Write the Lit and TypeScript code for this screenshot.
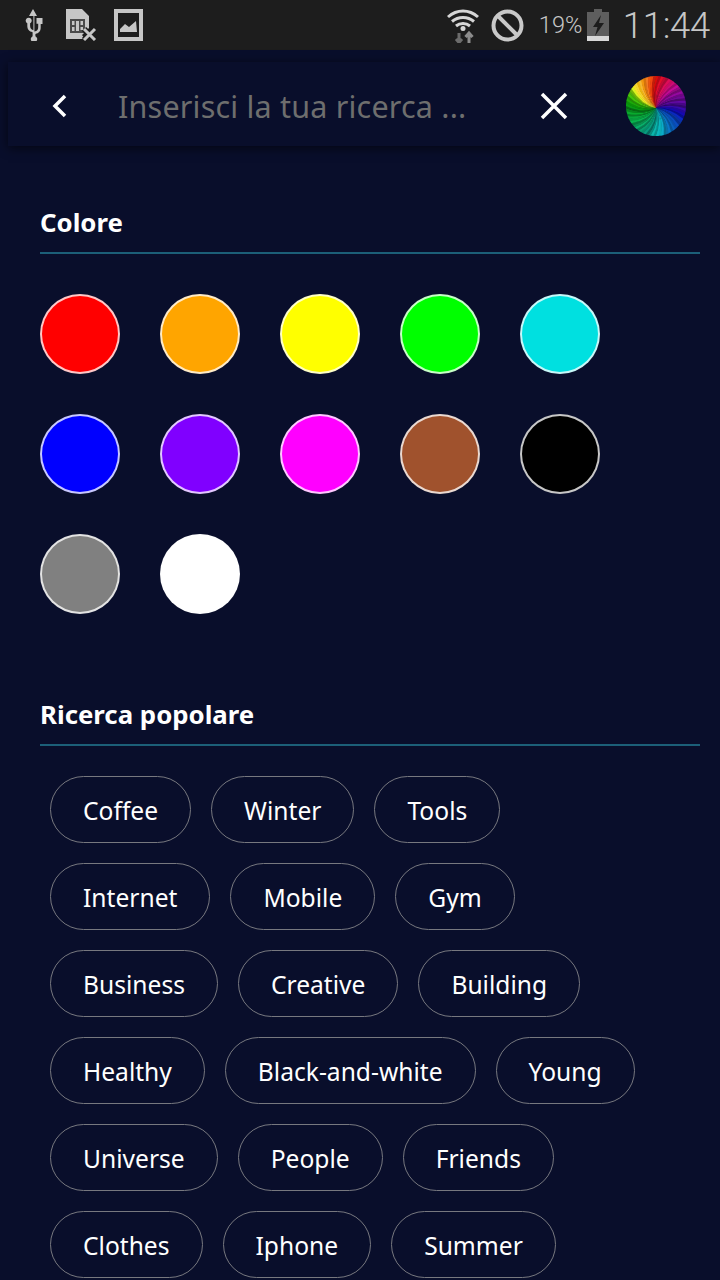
import { LitElement, html, css, svg } from "lit";
import { customElement } from "lit/decorators.js";

const SWATCHES = [
  "#ff0000", "#ffa500", "#ffff00", "#00ff00", "#00e0e0",
  "#0000ff", "#8000ff", "#ff00ff", "#a0522d", "#000000",
  "#808080", "#ffffff",
];

const TAG_ROWS = [
  ["Coffee", "Winter", "Tools"],
  ["Internet", "Mobile", "Gym"],
  ["Business", "Creative", "Building"],
  ["Healthy", "Black-and-white", "Young"],
  ["Universe", "People", "Friends"],
  ["Clothes", "Iphone", "Summer"],
];

/* Clock position, hue and lightness of the wheel's colour bands. */
const BANDS: [number, number, number][] = [
  [0, 360, 42], [0.08, 335, 42], [0.18, 290, 27], [0.25, 265, 30],
  [0.33, 225, 36], [0.42, 205, 36], [0.47, 185, 38], [0.55, 170, 28],
  [0.65, 145, 33], [0.75, 125, 28], [0.82, 95, 38], [0.86, 55, 55],
  [0.92, 35, 52], [0.97, 15, 48], [1, 0, 42],
];

function bandAt(t: number): [number, number] {
  for (let i = 1; i < BANDS.length; i++) {
    const [t0, h0, l0] = BANDS[i - 1];
    const [t1, h1, l1] = BANDS[i];
    if (t <= t1) {
      const k = (t - t0) / (t1 - t0);
      return [h0 + k * (h1 - h0), l0 + k * (l1 - l0)];
    }
  }
  return [0, 42];
}

/* Swirled hue wheel: thin curved wedges around a slightly low centre. */
function wheelWedges() {
  const parts = [];
  const n = 72;
  const r = 30;
  const cy = 2;
  const bend = 0.4;
  for (let i = 0; i < n; i++) {
    const a0 = (i / n) * Math.PI * 2 - Math.PI / 2;
    const a1 = ((i + 1.25) / n) * Math.PI * 2 - Math.PI / 2;
    const mx = (a: number) => (r * 0.5 * Math.cos(a - bend)).toFixed(2);
    const my = (a: number) => (cy + r * 0.5 * Math.sin(a - bend)).toFixed(2);
    const ex = (a: number) => (r * Math.cos(a)).toFixed(2);
    const ey = (a: number) => (r * Math.sin(a)).toFixed(2);
    const [hue, base] = bandAt(i / n);
    const light = base + [3, -5, 5, -2, -7, 4, 0][i % 7];
    const d = `M0 ${cy}Q${mx(a0)} ${my(a0)} ${ex(a0)} ${ey(a0)}A${r} ${r} 0 0 1 ${ex(a1)} ${ey(a1)}Q${mx(a1)} ${my(a1)} 0 ${cy}Z`;
    parts.push(svg`<path d=${d} fill=${`hsl(${hue} 90% ${light}%)`}></path>`);
  }
  return parts;
}

@customElement("app-root")
export class AppRoot extends LitElement {
  static styles = css`
    :host {
      display: block;
      width: 720px;
      height: 1280px;
      overflow: hidden;
      background: #090e2b;
      font-family: "Noto Sans", "Lato", sans-serif;
      color: #fff;
    }
    svg { display: block; flex: none; }
    .status {
      height: 50px;
      background: #1d1d1d;
      display: flex;
      align-items: center;
      color: #c6c6c6;
      font-family: "Roboto", sans-serif;
    }
    .status .usb { margin-left: 21px; }
    .status .sim { margin-left: 21px; }
    .status .pic { margin-left: 17px; }
    .status .wifi { margin-left: auto; }
    .status .block { margin-left: 11px; }
    .pct { margin-left: 15px; font-size: 23.5px; font-weight: 300; width: 44px; }
    .status .batt { margin-left: 4px; }
    .clock { margin-left: 14px; margin-right: 10px; font-size: 36.5px; font-weight: 300; letter-spacing: -0.3px; }

    .search {
      margin: 12px 0 0 8px;
      width: 712px;
      height: 84px;
      padding-top: 4px;
      background: #090e2b;
      box-shadow: 0 2px 10px rgba(0, 0, 0, 0.6);
      display: flex;
      align-items: center;
      box-sizing: border-box;
      position: relative;
    }
    .search .back { margin-left: 44px; }
    .hint {
      margin-left: 50px;
      width: 422px;
      font-size: 30.5px;
      letter-spacing: 0.2px;
      color: #6e6e6e;
      white-space: nowrap;
    }
    .search .wheel { margin-left: 58px; }

    .section { padding: 0 20px 0 40px; }
    .colors { margin-top: 57px; }
    .popular { margin-top: 81px; }
    h2 {
      margin: 0;
      font-size: 25.8px;
      line-height: 38px;
      font-weight: 700;
      padding-bottom: 11px;
      border-bottom: 2px solid #1c5f78;
    }
    .swatches {
      display: grid;
      grid-template-columns: repeat(5, 80px);
      grid-auto-rows: 80px;
      gap: 40px;
      margin-top: 40px;
    }
    .swatch {
      border-radius: 50%;
      box-sizing: border-box;
      border: 2px solid rgba(255, 255, 255, 0.78);
    }
    .tags { margin: 30px 0 0 10px; display: flex; flex-direction: column; gap: 20px; }
    .tag-row { display: flex; gap: 20px; }
    .tag {
      height: 67px;
      box-sizing: border-box;
      border: 1px solid #77787f;
      border-radius: 34px;
      padding: 1px 32px 0;
      display: flex;
      align-items: center;
      font-size: 24.6px;
    }
  `;

  render() {
    return html`
      <div class="status">
        <svg class="usb" width="24" height="32" viewBox="0 0 24 32" fill="#c6c6c6">
          <path d="M12 0l4 7h-2.600v15.600c3-.6 3.800-2 3.800-4.600v-3.200h-1.700V9h6v6h-1.800v3.300c0 4-1.800 6-5.300 6.600v2.300a3.200 3.200 0 1 1-2.800 0v-4c-3.500-.6-5.300-2.600-5.300-6.600v-2.300a3 3 0 1 1 2.800 0v2.300c0 2.600.8 4 3.300 4.600V7H8z"></path>
        </svg>
        <svg class="sim" width="31" height="32" viewBox="0 0 31 32">
          <path d="M0 0h16l7 7v12l-7 7 3 4H0z" fill="#c6c6c6"></path>
          <path d="M4 10h15v14H4z" fill="#4a4a4a"></path>
          <path d="M6 12h2.500v4H6zM6 18h2.500v4H6zM10 12h3v10h-3zM14.500 12H17v4h-2.500zM14.500 18H17v3h-2.500z" fill="#c6c6c6"></path>
          <path d="M18 20l11 11M29 20L18 31" stroke="#1d1d1d" stroke-width="6"></path>
          <path d="M18 20l11 11M29 20L18 31" stroke="#c6c6c6" stroke-width="3"></path>
        </svg>
        <svg class="pic" width="29" height="32" viewBox="0 0 29 32">
          <path d="M0 0h29v32H0z" fill="#c6c6c6"></path>
          <path d="M4 4h21v24H4z" fill="#1d1d1d"></path>
          <path d="M6 23v-3l5-5 4 3 7-6 1 11z" fill="#c6c6c6"></path>
        </svg>

        <svg class="wifi" width="34" height="35" viewBox="0 0 34 35" fill="none" stroke="#d6d6d6" stroke-width="3">
          <path d="M2 9c9-8 21-8 30 0M6 13.500c6.500-5.500 15.500-5.500 22 0M10 18c4-3.400 10-3.400 14 0"></path>
          <circle cx="17" cy="20.500" r="2.500" fill="#d6d6d6" stroke="none"></circle>
          <path d="M13 25v9M10 31l3 3.500 3-3.500" stroke="#6c6c6c"></path>
          <path d="M23 35V25M19.500 29l3.500-4 3.500 4" stroke="#8c8c8c"></path>
        </svg>
        <svg class="block" width="33" height="33" viewBox="0 0 33 33" fill="none" stroke="#c9c9c9" stroke-width="4">
          <circle cx="16.500" cy="16.500" r="14"></circle>
          <path d="M6.500 6.500l20 20"></path>
        </svg>
        <span class="pct">19%</span>
        <svg class="batt" width="22" height="32" viewBox="0 0 22 32">
          <path d="M7 0h8v3h7v24H0V3h7z" fill="#5e5e5e"></path>
          <path d="M0 27h22v5H0z" fill="#d8d8d8"></path>
          <path d="M14 6L6 18h4.500L8 27l9-13h-5z" fill="#1d1d1d"></path>
        </svg>
        <span class="clock">11:44</span>
      </div>

      <div class="search">
        <svg class="back" width="16" height="24" viewBox="0 0 16 24" fill="none" stroke="#fff" stroke-width="3.500">
          <path d="M13 2L3 12l10 10"></path>
        </svg>
        <span class="hint">Inserisci la tua ricerca ...</span>
        <svg width="28" height="28" viewBox="0 0 28 28" stroke="#fff" stroke-width="3.500">
          <path d="M2 2l24 24M26 2L2 26"></path>
        </svg>
        <svg class="wheel" width="60" height="60" viewBox="-30 -30 60 60">${wheelWedges()}</svg>
      </div>

      <section class="section colors">
        <h2>Colore</h2>
        <div class="swatches">
          ${SWATCHES.map((c) => html`<div class="swatch" style="background:${c}"></div>`)}
        </div>
      </section>

      <section class="section popular">
        <h2>Ricerca popolare</h2>
        <div class="tags">
          ${TAG_ROWS.map(
            (row) => html`<div class="tag-row">${row.map((t) => html`<div class="tag">${t}</div>`)}</div>`,
          )}
        </div>
      </section>
    `;
  }
}
